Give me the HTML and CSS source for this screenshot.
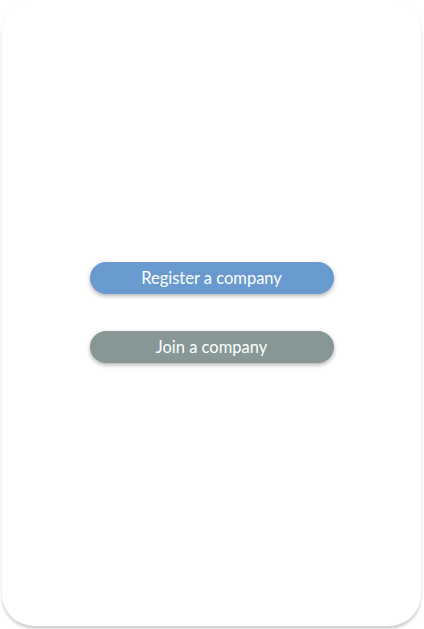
FILE: index.html
```html
<!DOCTYPE html>
<html lang="en">
<head>
<meta charset="utf-8">
<title>Company</title>
<link rel="stylesheet" href="styles.css">
</head>
<body>
<main class="card">
  <div class="actions">
    <button class="btn btn-primary" type="button">Register a company</button>
    <button class="btn btn-secondary" type="button">Join a company</button>
  </div>
</main>
</body>
</html>
```
FILE: styles.css
```css
html, body {
  margin: 0;
  padding: 0;
  background: #ffffff;
}
body {
  width: 424px;
  height: 629px;
  padding: 0 3px 3px 2px;
  box-sizing: border-box;
  font-family: Lato, "Open Sans", sans-serif;
}
.card {
  height: 626px;
  background: #ffffff;
  border-radius: 32px;
  box-shadow: 0 3px 3px rgba(0, 0, 0, 0.18);
  display: flex;
  align-items: center;
  justify-content: center;
}
.actions {
  display: flex;
  flex-direction: column;
  gap: 37px;
  margin-top: -1px;
}
.btn {
  width: 244px;
  height: 32px;
  border: none;
  border-radius: 16px;
  color: #ffffff;
  font-family: Lato, "Open Sans", sans-serif;
  font-size: 16.5px;
  padding: 0 0 1px;
  box-shadow: 0 2px 4px rgba(0, 0, 0, 0.3);
  cursor: pointer;
}
.btn-primary {
  background: #6899cf;
}
.btn-secondary {
  background: #869795;
}
```
